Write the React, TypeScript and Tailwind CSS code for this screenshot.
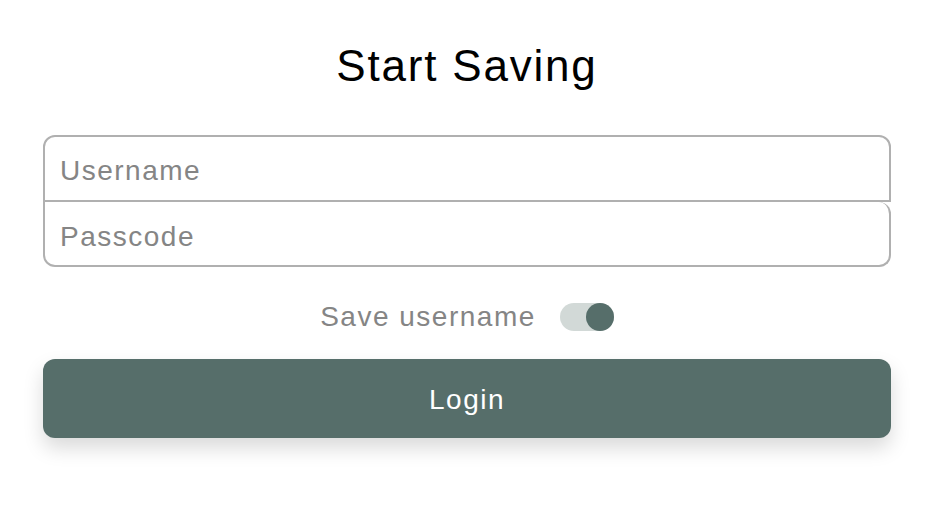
import { useState } from "react";

export default function App() {
  const [saveUsername, setSaveUsername] = useState(true);

  return (
    <div className="w-full h-[508px] bg-white px-[43px] pt-[44px] font-['Liberation_Sans',Arial,sans-serif]">
      <h1 className="text-[44px] leading-[44px] text-center text-black tracking-[1.8px]">
        Start Saving
      </h1>

      <div className="mt-[47px] flex flex-col">
        <input
          type="text"
          placeholder="Username"
          className="h-[67px] w-full border-2 border-[#b0b0b0] rounded-t-[12px] pl-[15px] pt-[4px] text-[28px] tracking-[1.5px] text-[#333] placeholder:text-[#858585] outline-none"
        />
        <input
          type="password"
          placeholder="Passcode"
          className="h-[65px] w-full border-2 border-t-0 border-[#b0b0b0] rounded-tr-[12px] rounded-b-[12px] pl-[15px] pt-[7px] text-[28px] tracking-[1.5px] text-[#333] placeholder:text-[#858585] outline-none"
        />
      </div>

      <div className="mt-[36px] h-[28px] flex items-center justify-center gap-[24px]">
        <span className="text-[28px] leading-[28px] tracking-[1.5px] text-[#858585]">
          Save username
        </span>
        <button
          onClick={() => setSaveUsername(!saveUsername)}
          className="relative w-[54px] h-[28px] rounded-full bg-[#d2d9d7]"
        >
          <span
            className={`absolute top-0 w-[28px] h-[28px] rounded-full bg-[#566e6a] ${
              saveUsername ? "right-0" : "left-0"
            }`}
          />
        </button>
      </div>

      <button className="mt-[28px] w-full h-[79px] pt-[3px] rounded-[12px] bg-[#566e6a] text-white text-[28px] tracking-[1.5px] shadow-[0_10px_20px_rgba(0,0,0,0.15)]">
        Login
      </button>
    </div>
  );
}
